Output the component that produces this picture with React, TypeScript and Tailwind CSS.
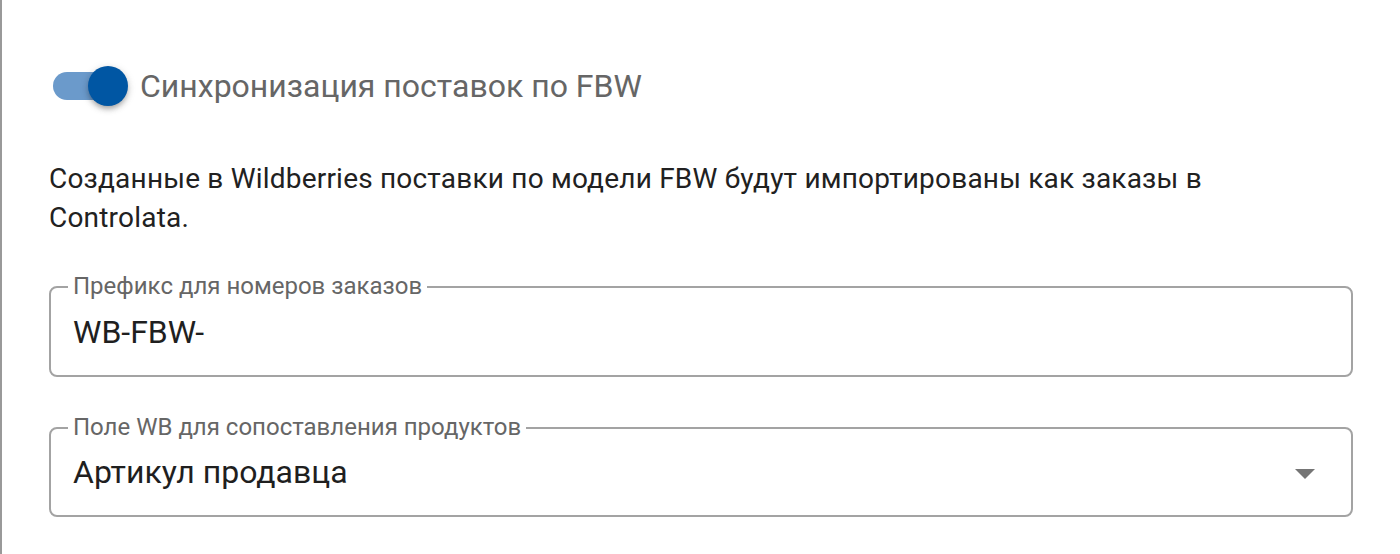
import React, { useState } from 'react';

const font = { fontFamily: 'Roboto, "Noto Sans", sans-serif' };

const Toggle: React.FC<{ checked: boolean; onChange: () => void }> = ({ checked, onChange }) => (
    <button type="button" onClick={onChange} className="relative w-[111px] h-[76px] shrink-0 flex items-center pl-[24px]">
        <span className={`w-[68px] h-[28px] rounded-full ${checked ? 'bg-[#6b9acb]' : 'bg-[#b0b0b0]'}`} />
        {/* thumb sits over the track */}
        <span
            className={`absolute top-[18px] w-[40px] h-[40px] rounded-full shadow-[0_4px_5px_-2px_rgba(0,0,0,0.2),0_3px_6px_0_rgba(0,0,0,0.14),0_2px_10px_0_rgba(0,0,0,0.12)] ${checked ? 'left-[59px] bg-[#0056a3]' : 'left-[18px] bg-white'}`}
        />
    </button>
);

const OutlinedField: React.FC<{ label: string; children: React.ReactNode; className?: string }> = ({ label, children, className }) => (
    <div className={`relative border-2 border-[#a3a3a3] rounded-lg flex items-center pl-[22px] ${className ?? ''}`}>
        {/* notched label on the border */}
        <span className="absolute left-[17px] top-[-16px] px-[5px] bg-white text-[24px] leading-[28px] text-[#666666]">
            {label}
        </span>
        {children}
    </div>
);

const App: React.FC = () => {
    const [enabled, setEnabled] = useState(true);
    const [prefix, setPrefix] = useState('WB-FBW-');

    return (
        <div className="h-[554px] w-full overflow-hidden bg-white border-l-2 border-[#999999] pt-[48px] pl-[47px] pr-[47px] flex flex-col" style={font}>
            {/* Switch row */}
            <div className="flex items-center -ml-[20px]">
                <Toggle checked={enabled} onChange={() => setEnabled(!enabled)} />
                <span className="text-[32px] leading-[40px] text-[#666666]">Синхронизация поставок по FBW</span>
            </div>

            <p className="mt-[35px] pr-[20px] text-[28px] leading-[39px] tracking-[0.2px] text-[#212121]">
                Созданные в Wildberries поставки по модели FBW будут импортированы как заказы в Controlata.
            </p>

            <div className="mt-[49px] flex flex-col gap-[50px]">
                <OutlinedField label="Префикс для номеров заказов" className="h-[91px] pr-[22px]">
                    <input
                        value={prefix}
                        onChange={e => setPrefix(e.target.value)}
                        className="w-full bg-transparent outline-none text-[32px] text-[#1f1f1f]"
                        style={font}
                    />
                </OutlinedField>

                <OutlinedField label="Поле WB для сопоставления продуктов" className="h-[90px] justify-between pr-[36px]">
                    <span className="text-[32px] text-[#1f1f1f]">Артикул продавца</span>
                    <svg width="20" height="10" viewBox="0 0 20 10" className="mt-[3px]">
                        <path d="M0 0 L10 10 L20 0 Z" fill="#757575" />
                    </svg>
                </OutlinedField>
            </div>
        </div>
    );
};

export default App;
